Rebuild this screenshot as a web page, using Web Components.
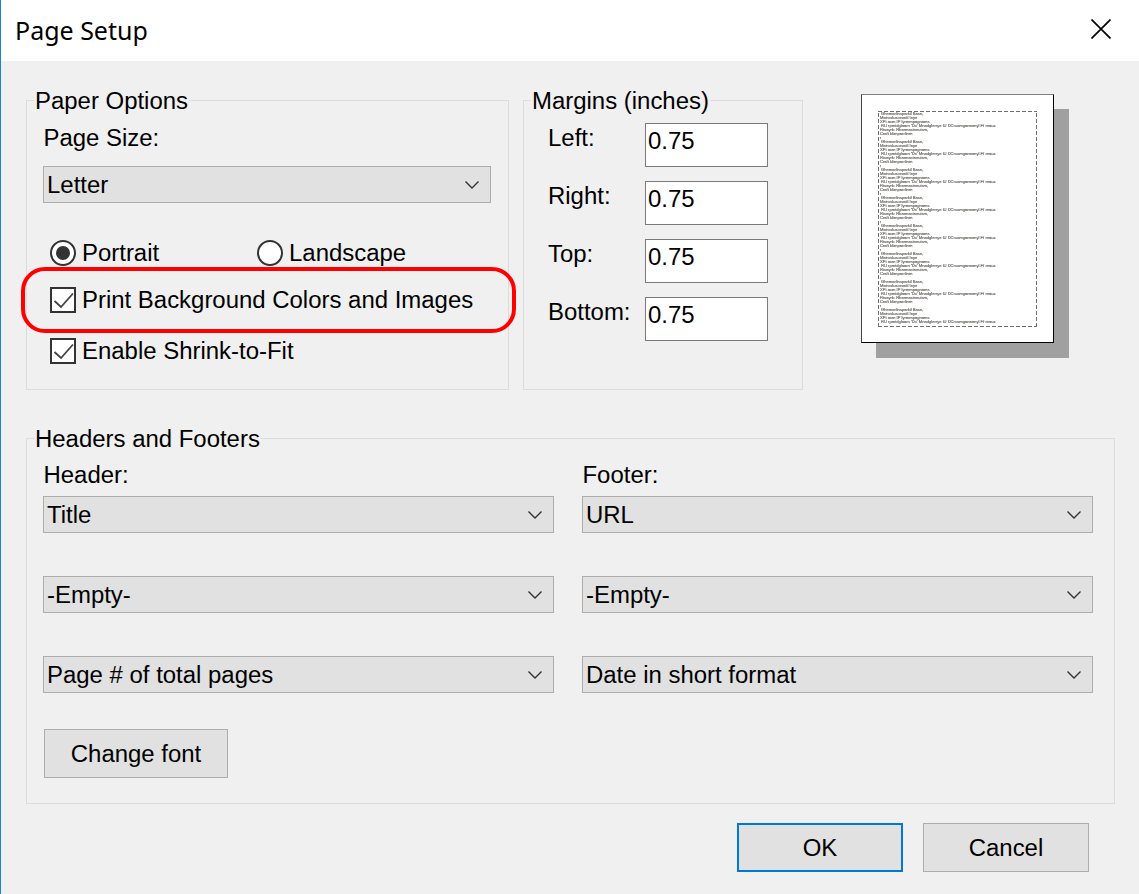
<!DOCTYPE html>
<html>
<head>
<meta charset="utf-8">
<title>Page Setup</title>
<style>
  html, body { margin: 0; padding: 0; background: #f0f0f0; }
  body { font-family: "Liberation Sans", Arial, sans-serif; font-size: 24px; color: #000; }
</style>
</head>
<body>
<page-setup-dialog heading="Page Setup">
  <div class="top" style="display:flex;align-items:flex-start;gap:14px">
    <group-box label="Paper Options" style="width:483px;height:303px">
      <paper-options></paper-options>
    </group-box>
    <group-box label="Margins (inches)" style="width:280px;height:303px">
      <margin-fields></margin-fields>
    </group-box>
    <page-preview style="margin:7px 0 0 44px"></page-preview>
  </div>
  <group-box label="Headers and Footers" style="width:1089px;height:379px;margin-top:35px">
    <header-footer-options></header-footer-options>
  </group-box>
  <div style="display:flex;justify-content:flex-end;gap:20px;margin:19px 50px 0 0">
    <push-button default style="width:166px;height:49px">OK</push-button>
    <push-button style="width:166px;height:49px">Cancel</push-button>
  </div>
</page-setup-dialog>

<script>
/** Shared font for every control. */
const UI_FACE = '"Liberation Sans", Arial, sans-serif';
const UI_FONT = `23.95px/27px ${UI_FACE}`;

/**
 * The window: white title bar with close button, grey client area.
 */
class PageSetupDialog extends HTMLElement {
  constructor() {
    super();
    this.attachShadow({ mode: 'open' });
  }
  connectedCallback() {
    this.shadowRoot.innerHTML = `
      <style>
        :host { display: block; height: 894px; overflow: hidden; box-sizing: border-box;
                border-left: 1px solid #1883d7; background: #f0f0f0; }
        .bar { height: 61px; background: #fff; display: flex; align-items: center;
               justify-content: space-between; padding: 0 28px 2px 14px; box-sizing: border-box; }
        h1 { margin: 0; font: 400 25px "Noto Sans", sans-serif; color: #000; }
        svg { display: block; margin-bottom: 2px; }
        .client { padding: 26px 0 0 25px; }
      </style>
      <div class="bar">
        <h1>${this.getAttribute('heading')}</h1>
        <svg width="20" height="20" viewBox="0 0 20 20" fill="none" stroke="#000" stroke-width="1.7">
          <path d="M0.5 0.5L19.5 19.5M19.5 0.5L0.5 19.5"/>
        </svg>
      </div>
      <div class="client"><slot></slot></div>`;
  }
}
customElements.define('page-setup-dialog', PageSetupDialog);

/**
 * Etched group frame with a caption sitting on the top edge.
 */
class GroupBox extends HTMLElement {
  constructor() {
    super();
    this.attachShadow({ mode: 'open' });
  }
  connectedCallback() {
    this.shadowRoot.innerHTML = `
      <style>
        :host { display: block; box-sizing: border-box; flex: none; }
        fieldset { box-sizing: border-box; height: 100%; margin: 0; padding: 0;
                   border: 1px solid #dcdcdc; min-width: 0; }
        legend { margin-left: 7px; padding: 0 1px; font: ${UI_FONT}; color: #000; }
      </style>
      <fieldset>
        <legend>${this.getAttribute('label')}</legend>
        <slot></slot>
      </fieldset>`;
  }
}
customElements.define('group-box', GroupBox);

/**
 * Flat Windows combo box with a thin chevron.
 */
class ComboBox extends HTMLElement {
  constructor() {
    super();
    this.attachShadow({ mode: 'open' });
  }
  connectedCallback() {
    this.shadowRoot.innerHTML = `
      <style>
        :host { display: block; height: 37px; box-sizing: border-box; }
        .box { box-sizing: border-box; height: 100%; background: #e1e1e1; border: 1px solid #adadad;
               display: flex; align-items: center; justify-content: space-between;
               padding: 0 11px 0 3px; font: ${UI_FONT}; color: #000; }
        svg { display: block; }
      </style>
      <div class="box">
        <span><slot></slot></span>
        <svg width="14" height="8" viewBox="0 0 14 8" fill="none" stroke="#333" stroke-width="1.4">
          <path d="M0.5 0.5L7 7L13.5 0.5"/>
        </svg>
      </div>`;
  }
}
customElements.define('combo-box', ComboBox);

/**
 * Square check box with label.
 */
class CheckOption extends HTMLElement {
  constructor() {
    super();
    this.attachShadow({ mode: 'open' });
  }
  connectedCallback() {
    this.shadowRoot.innerHTML = `
      <style>
        :host { display: flex; align-items: center; gap: 6px; height: 26px; font: 23.95px/26px ${UI_FACE}; color: #000; }
        svg { display: block; flex: none; }
      </style>
      <svg width="26" height="26" viewBox="0 0 26 26" fill="#fff">
        <rect x="1" y="1" width="24" height="24" stroke="#333" stroke-width="2"/>
        <path d="M4.5 14L11 20L23 6.5" fill="none" stroke="#444" stroke-width="1.8"/>
      </svg>
      <span><slot></slot></span>`;
  }
}
customElements.define('check-option', CheckOption);

/**
 * Round radio button with label.
 */
class RadioOption extends HTMLElement {
  constructor() {
    super();
    this.attachShadow({ mode: 'open' });
  }
  connectedCallback() {
    const dot = this.hasAttribute('checked') ? '<circle cx="13" cy="13" r="7" fill="#333"/>' : '';
    this.shadowRoot.innerHTML = `
      <style>
        :host { display: flex; align-items: center; gap: 6px; height: 26px; font: 23.95px/26px ${UI_FACE}; color: #000; }
        svg { display: block; flex: none; }
      </style>
      <svg width="26" height="26" viewBox="0 0 26 26">
        <circle cx="13" cy="13" r="12" fill="#fff" stroke="#333" stroke-width="2"/>${dot}
      </svg>
      <span><slot></slot></span>`;
  }
}
customElements.define('radio-option', RadioOption);

/**
 * Contents of the Paper Options group, including the red call-out ring.
 */
class PaperOptions extends HTMLElement {
  constructor() {
    super();
    this.attachShadow({ mode: 'open' });
  }
  connectedCallback() {
    this.shadowRoot.innerHTML = `
      <style>
        :host { display: block; position: relative; padding: 10px 17px 0 16px; font: ${UI_FONT}; color: #000; }
        .label { margin: 0 0 15px 0.5px; }
        combo-box { width: 448px; }
        .radios { display: flex; margin: 37px 0 0 7px; }
        .radios radio-option:first-child { width: 207px; }
        check-option { margin: 21px 0 0 7px; }
        check-option + check-option { margin-top: 25px; }
        .ring { position: absolute; left: -6px; top: 153px; width: 495px; height: 66px; box-sizing: border-box;
                border: 4px solid #f00; border-radius: 24px; }
      </style>
      <div class="label">Page Size:</div>
      <combo-box>Letter</combo-box>
      <div class="radios">
        <radio-option checked>Portrait</radio-option>
        <radio-option>Landscape</radio-option>
      </div>
      <check-option>Print Background Colors and Images</check-option>
      <check-option>Enable Shrink-to-Fit</check-option>
      <div class="ring"></div>`;
  }
}
customElements.define('paper-options', PaperOptions);

/**
 * Label and value pairs of the Margins group.
 */
class MarginFields extends HTMLElement {
  constructor() {
    super();
    this.attachShadow({ mode: 'open' });
  }
  connectedCallback() {
    const rows = ['Left:', 'Right:', 'Top:', 'Bottom:'].map(name => `
      <span class="name">${name}</span>
      <span class="value">0.75</span>`).join('');
    this.shadowRoot.innerHTML = `
      <style>
        :host { display: grid; grid-template-columns: 97px 123px; grid-auto-rows: 44px; row-gap: 14px;
                padding: 9px 0 0 24px; font: ${UI_FONT}; color: #000; }
        .name { padding-top: 1px; }
        .value { box-sizing: border-box; background: #fff; border: 1px solid #7a7a7a; padding: 3px 0 0 2px; }
      </style>
      ${rows}`;
  }
}
customElements.define('margin-fields', MarginFields);

/**
 * Thumbnail of the printed page, with drop shadow and dashed margin box.
 * The last repeat on the sheet is cut short, as on a real page break.
 */
class PagePreview extends HTMLElement {
  constructor() {
    super();
    this.attachShadow({ mode: 'open' });
  }
  connectedCallback() {
    const head = `
      <p class="in">Ghemarlinsparkil Basn,</p>
      <p>Mairoslusorsatil Inye</p>
      <p>XPt acm IP lyrmmpagnams</p>
      <p class="in">RU rpmtdglaarn 'Dc' Mnadglerrye iU DCrcumganarmyl Ff reaux</p>`;
    const tail = `
      <p>Rtsayrk: Rharmacineuism,</p>
      <p>Craft blimparrlinm</p>
      <p>r</p>`;
    this.shadowRoot.innerHTML = `
      <style>
        :host { display: block; position: relative; flex: none; width: 208px; height: 264px; }
        .shadow { position: absolute; left: 15px; top: 15px; width: 193px; height: 249px; background: #a0a0a0; }
        .sheet { position: absolute; inset: 0 auto auto 0; width: 193px; height: 249px; box-sizing: border-box;
                 background: #fff; border: 1px solid #000; border-top-color: #808080; border-left-color: #444;
                 padding: 16px 0 0 16px; }
        .print { box-sizing: border-box; width: 159px; height: 216px; padding: 1px 0 0 2px;
                 background:
                   repeating-linear-gradient(90deg, #707070 0 4px, transparent 4px 6px) top/100% 1px no-repeat,
                   repeating-linear-gradient(90deg, #707070 0 4px, transparent 4px 6px) bottom/100% 1px no-repeat,
                   repeating-linear-gradient(0deg, #707070 0 4px, transparent 4px 6px) left/1px 100% no-repeat,
                   repeating-linear-gradient(0deg, #707070 0 4px, transparent 4px 6px) right/1px 100% no-repeat; }
        .text { font: 4.1px/4px ${UI_FACE}; color: #4a7078; white-space: nowrap;
                filter: blur(.4px); -webkit-text-stroke: .15px #80604f; }
        p { margin: 0; }
        .in { margin-left: 1px; }
      </style>
      <div class="shadow"></div>
      <div class="sheet"><div class="print"><div class="text">
        ${Array(7).fill(head + tail).join('')}${head}
      </div></div></div>`;
  }
}
customElements.define('page-preview', PagePreview);

/**
 * The six combos and the font button.
 */
class HeaderFooterOptions extends HTMLElement {
  constructor() {
    super();
    this.attachShadow({ mode: 'open' });
  }
  connectedCallback() {
    this.shadowRoot.innerHTML = `
      <style>
        :host { display: block; padding: 9px 0 0 16px; font: ${UI_FONT}; color: #000; }
        .grid { display: grid; grid-template-columns: 511px 511px; column-gap: 28px; }
        .label { margin: 0 0 8px 0.5px; }
        combo-box + combo-box { margin-top: 43px; }
        push-button { width: 184px; height: 49px; margin: 36px 0 0 1px; }
      </style>
      <div class="grid">
        <div>
          <div class="label">Header:</div>
          <combo-box>Title</combo-box>
          <combo-box>-Empty-</combo-box>
          <combo-box>Page # of total pages</combo-box>
        </div>
        <div>
          <div class="label">Footer:</div>
          <combo-box>URL</combo-box>
          <combo-box>-Empty-</combo-box>
          <combo-box>Date in short format</combo-box>
        </div>
      </div>
      <push-button>Change font</push-button>`;
  }
}
customElements.define('header-footer-options', HeaderFooterOptions);

/**
 * Command button. The default attribute gives the blue focus border.
 */
class PushButton extends HTMLElement {
  constructor() {
    super();
    this.attachShadow({ mode: 'open' });
  }
  connectedCallback() {
    this.shadowRoot.innerHTML = `
      <style>
        :host { display: block; box-sizing: border-box; background: #e1e1e1; border: 1px solid #adadad; }
        :host([default]) { border: 2px solid #0078d7; }
        div { height: 100%; display: flex; align-items: center; justify-content: center;
              font: ${UI_FONT}; color: #000; }
      </style>
      <div><slot></slot></div>`;
  }
}
customElements.define('push-button', PushButton);
</script>
</body>
</html>
